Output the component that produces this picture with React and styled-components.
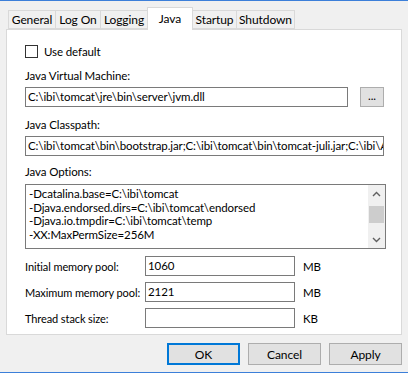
import React from "react";
import styled, { createGlobalStyle } from "styled-components";

const GlobalStyle = createGlobalStyle`
  html, body {
    margin: 0;
    padding: 0;
    background: #f0f0f0;
  }
  * {
    box-sizing: border-box;
  }
`;

const tabs = [
  { label: "General", width: 48 },
  { label: "Log On", width: 46 },
  { label: "Logging", width: 48 },
  { label: "Java", width: 46, active: true },
  { label: "Startup", width: 45 },
  { label: "Shutdown", width: 59 },
];

const options = [
  "-Dcatalina.base=C:\\ibi\\tomcat",
  "-Djava.endorsed.dirs=C:\\ibi\\tomcat\\endorsed",
  "-Djava.io.tmpdir=C:\\ibi\\tomcat\\temp",
  "-XX:MaxPermSize=256M",
];

const memory = [
  { label: "Initial memory pool:", value: "1060", unit: "MB" },
  { label: "Maximum memory pool:", value: "2121", unit: "MB" },
  { label: "Thread stack size:", value: "", unit: "KB" },
];

const Chevron = ({ up }) => (
  <svg width="9" height="6" viewBox="0 0 9 6">
    <path
      d={up ? "M1 5 L4.5 1.5 L8 5" : "M1 1 L4.5 4.5 L8 1"}
      fill="none"
      stroke="#606060"
      strokeWidth="1.4"
    />
  </svg>
);

const App = () => {
  return (
    <Window>
      <GlobalStyle />
      <TabBar>
        {tabs.map((t) => (
          <Tab key={t.label} $active={t.active} $width={t.width}>
            {t.label}
          </Tab>
        ))}
      </TabBar>
      <Panel>
        <CheckRow>
          <CheckBox />
          <span>Use default</span>
        </CheckRow>

        <Label $top={10}>Java Virtual Machine:</Label>
        <FieldRow>
          <TextBox $grow>C:\ibi\tomcat\jre\bin\server\jvm.dll</TextBox>
          <SmallButton>...</SmallButton>
        </FieldRow>

        <Label $top={10}>Java Classpath:</Label>
        <FieldRow>
          <TextBox $grow>
            C:\ibi\tomcat\bin\bootstrap.jar;C:\ibi\tomcat\bin\tomcat-juli.jar;C:\ibi\Apps\lib
          </TextBox>
        </FieldRow>

        <Label $top={8}>Java Options:</Label>
        <OptionsBox>
          <OptionsText>
            {options.map((o) => (
              <div key={o}>{o}</div>
            ))}
          </OptionsText>
          <ScrollBar>
            <ScrollArrow>
              <Chevron up />
            </ScrollArrow>
            <Thumb />
            <ScrollSpacer />
            <ScrollArrow>
              <Chevron />
            </ScrollArrow>
          </ScrollBar>
        </OptionsBox>

        <MemoryList>
          {memory.map((m) => (
            <MemoryRow key={m.label}>
              <MemoryLabel>{m.label}</MemoryLabel>
              <TextBox $width={150}>{m.value}</TextBox>
              <Unit>{m.unit}</Unit>
            </MemoryRow>
          ))}
        </MemoryList>
      </Panel>
      <ButtonRow>
        <DialogButton $default>OK</DialogButton>
        <DialogButton>Cancel</DialogButton>
        <DialogButton>Apply</DialogButton>
      </ButtonRow>
    </Window>
  );
};

export default App;

const Window = styled.div`
  width: 408px;
  height: 373px;
  border-top: 1px solid #3c7fd9;
  border-bottom: 1px solid #3c7fd9;
  padding: 0 6px;
  font-family: "Segoe UI", Lato, "Noto Sans", sans-serif;
  font-size: 11.5px;
  letter-spacing: -0.1px;
  color: #000;
  display: flex;
  flex-direction: column;
`;

const TabBar = styled.div`
  display: flex;
  height: 19px;
  margin-top: 9px;
  padding-left: 2px;
  position: relative;
  z-index: 1;
  align-items: flex-end;
`;

const Tab = styled.div`
  width: ${(p) => p.$width}px;
  height: ${(p) => (p.$active ? 23 : 19)}px;
  margin-bottom: ${(p) => (p.$active ? -1 : 0)}px;
  margin-left: -1px;
  border: 1px solid #d9d9d9;
  border-bottom: ${(p) => (p.$active ? "none" : "1px solid #d9d9d9")};
  background: ${(p) => (p.$active ? "#fff" : "#f0f0f0")};
  display: flex;
  align-items: ${(p) => (p.$active ? "flex-start" : "center")};
  padding-top: ${(p) => (p.$active ? 3 : 0)}px;
  justify-content: center;
  white-space: nowrap;
  font-size: 12px;
  &:first-child {
    margin-left: 0;
  }
`;

const Panel = styled.div`
  height: 306px;
  background: #fff;
  border: 1px solid #d9d9d9;
  padding: 15px 15px 0 18px;
  display: flex;
  flex-direction: column;
`;

const CheckRow = styled.div`
  display: flex;
  align-items: center;
  gap: 6px;
  height: 13px;
  line-height: 13px;
`;

const CheckBox = styled.div`
  width: 13px;
  height: 13px;
  border: 1px solid #333;
  background: #fff;
`;

const Label = styled.div`
  margin-top: ${(p) => p.$top}px;
  line-height: 15px;
  height: 15px;
  white-space: nowrap;
`;

const FieldRow = styled.div`
  display: flex;
  gap: 12px;
  margin-top: 4px;
  padding-right: 2px;
`;

const TextBox = styled.div`
  height: 20px;
  border: 1px solid #7a7a7a;
  background: #fff;
  padding: 0 2px;
  line-height: 18px;
  white-space: nowrap;
  overflow: hidden;
  ${(p) => (p.$grow ? "flex: 1; min-width: 0;" : "")}
  ${(p) => (p.$width ? `width: ${p.$width}px;` : "")}
`;

const SmallButton = styled.div`
  width: 24px;
  height: 20px;
  background: #e1e1e1;
  border: 1px solid #adadad;
  display: flex;
  align-items: center;
  justify-content: center;
  line-height: 1;
  padding-bottom: 2px;
`;

const OptionsBox = styled.div`
  margin-top: 5px;
  height: 65px;
  border: 1px solid #7a7a7a;
  display: flex;
`;

const OptionsText = styled.div`
  flex: 1;
  padding: 2px 3px;
  line-height: 13.5px;
  white-space: nowrap;
  overflow: hidden;
`;

const ScrollBar = styled.div`
  width: 17px;
  background: #f0f0f0;
  display: flex;
  flex-direction: column;
`;

const ScrollArrow = styled.div`
  height: 17px;
  display: flex;
  align-items: center;
  justify-content: center;
`;

const Thumb = styled.div`
  margin: 4px 1px 0;
  height: 17px;
  background: #cdcdcd;
`;

const ScrollSpacer = styled.div`
  flex: 1;
`;

const MemoryList = styled.div`
  margin-top: 7px;
  display: flex;
  flex-direction: column;
  gap: 6px;
`;

const MemoryRow = styled.div`
  display: flex;
  align-items: center;
`;

const MemoryLabel = styled.div`
  width: 120px;
  padding-right: 4px;
  white-space: nowrap;
  font-size: 11px;
`;

const Unit = styled.div`
  margin-left: 8px;
`;

const ButtonRow = styled.div`
  display: flex;
  justify-content: flex-end;
  gap: 8px;
  margin-top: 8px;
`;

const DialogButton = styled.div`
  width: 73px;
  height: 22px;
  background: #e1e1e1;
  border: ${(p) => (p.$default ? "2px solid #0078d7" : "1px solid #adadad")};
  display: flex;
  align-items: center;
  justify-content: center;
  font-size: 12px;
`;
